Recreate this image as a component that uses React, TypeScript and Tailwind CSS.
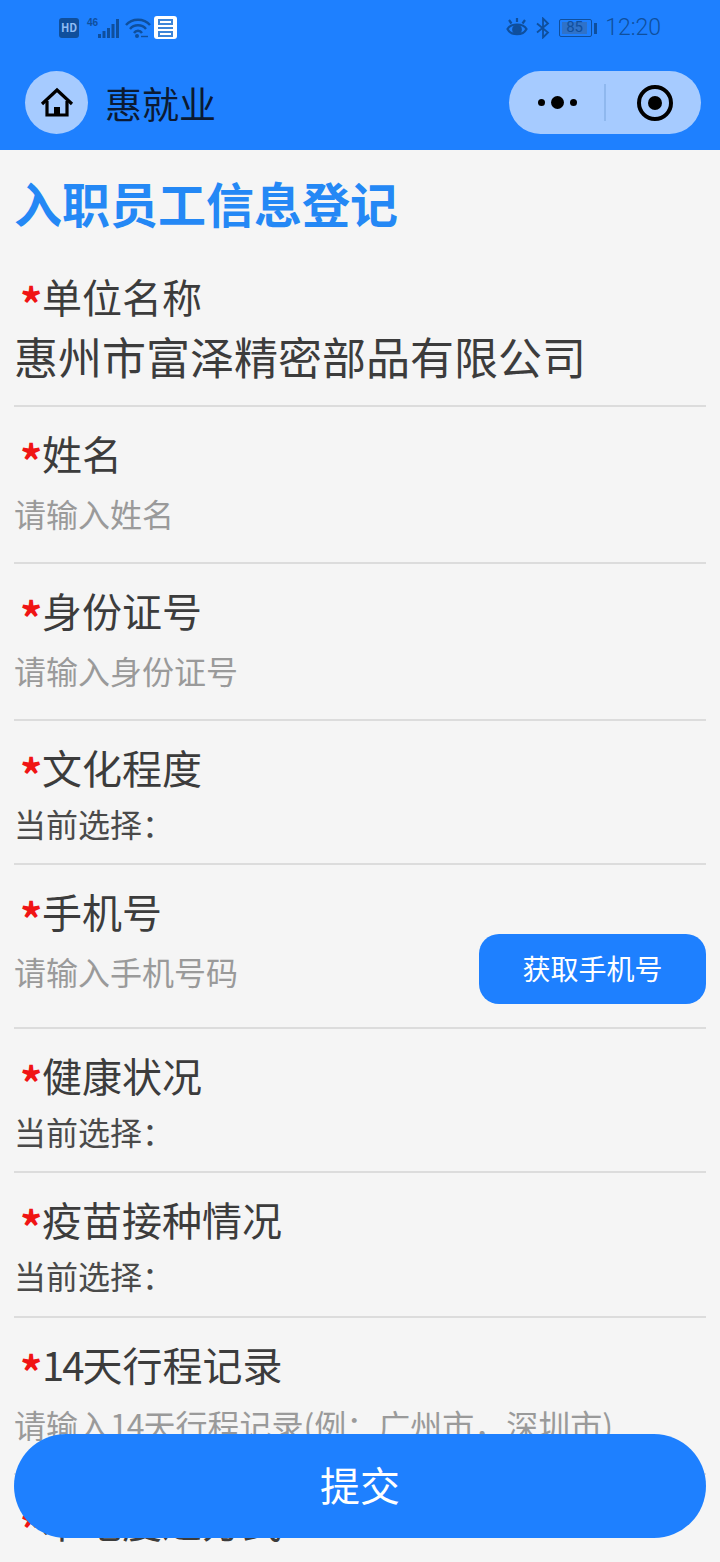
import type { ReactNode } from "react";

export default function App() { return <Page />; }

const font = "[font-family:'Noto_Sans_CJK_SC','Liberation_Sans',sans-serif]";

function Label({ text }: { text: ReactNode }) {
  return (
    <div className="flex h-10 items-center pl-[6px] text-[40px] leading-10 text-[#3c3c3c]">
      <span className="mt-[12px] h-5 w-[22px] text-[44px] leading-5 font-bold text-[#f01414]">*</span>
      <span>{text}</span>
    </div>
  );
}

function InputRow({ label, placeholder, h }: { label: ReactNode; placeholder: ReactNode; h: string }) {
  return (
    <section className={`${h} border-b-2 border-[#dcdcdc] pt-[26px]`}>
      <Label text={label} />
      <div className="mt-[20px] h-10 text-[32px] leading-10 text-[#9a9a9a]">{placeholder}</div>
    </section>
  );
}

function SelectRow({ label, h }: { label: ReactNode; h: string }) {
  return (
    <section className={`${h} border-b-2 border-[#dcdcdc] pt-[26px]`}>
      <Label text={label} />
      <div className="mt-4 h-10 text-[32px] leading-10 text-[#4a4a4a]">当前选择：</div>
    </section>
  );
}

function StatusBar() {
  return (
    <div className="flex h-[56px] items-start justify-between pl-[59px] pr-[59px] pt-[16px]">
      <div className="flex items-center">
        <div className="flex h-5 w-5 items-center justify-center rounded-[3px] bg-[#0f4f9d] text-[11px] leading-none font-bold text-[#8fbcf5]">HD</div>
        <svg width="36" height="22" viewBox="0 0 36 22" fill="#0f4f9d" className="ml-[7px]">
          <text x="1" y="9" fontSize="10" fontWeight="700" fontFamily="Liberation Sans">46</text>
          <rect x="12" y="17" width="3" height="4" /><rect x="16.5" y="14" width="3" height="7" /><rect x="21" y="11" width="3" height="10" /><rect x="25.5" y="7" width="3" height="14" /><rect x="30" y="2" width="3" height="19" />
        </svg>
        <svg width="26" height="22" viewBox="0 0 26 22" fill="none" stroke="#0f4f9d" strokeWidth="2.4" className="ml-[3px]">
          <path d="M1 8C7 1 19 1 25 8" /><path d="M5 12C9 7 17 7 21 12" /><path d="M9 16C11 13 15 13 17 16" /><circle cx="12" cy="19" r="2" fill="#0f4f9d" stroke="none" /><path d="M16 19.5H23" strokeWidth="1.4" />
        </svg>
        <div className="ml-[3px] flex h-[23px] w-[23px] flex-col justify-center gap-[2px] rounded-[3px] bg-white px-1">
          <div className="h-[6px] border-2 border-[#3d85d8]" />
          <div className="h-[2px] bg-[#3d85d8]" />
          <div className="h-[6px] border-2 border-[#3d85d8]" />
        </div>
      </div>
      <div className="flex items-center text-[#0f4f9d]">
        <svg width="22" height="22" viewBox="0 0 22 22" fill="none" stroke="#0f4f9d" strokeWidth="2.2">
          <path d="M1.5 12C5 6 17 6 20.5 12C17 19 5 19 1.5 12Z" /><circle cx="11" cy="12.5" r="3.8" fill="#0f4f9d" /><path d="M3 3L5.5 6.5M19 3L16.5 6.5M11 1V5" />
        </svg>
        <svg width="14" height="22" viewBox="0 0 14 22" fill="none" stroke="#0f4f9d" strokeWidth="1.8" className="ml-[8px]">
          <path d="M1 6.5L12 15.5L7 20.5V1.5L12 6.5L1 15.5" />
        </svg>
        <div className="relative ml-[9px] flex h-[18px] w-[33px] items-center rounded-[2px] border border-[#0f4f9d] p-[2px]">
          <div className="flex h-full w-[25px] items-center justify-center bg-[#2f72c9] pb-[1px] text-[15px] leading-none [font-family:'Roboto',sans-serif]">85</div>
        </div>
        <div className="ml-[2px] h-[11px] w-[3px] bg-[#0f4f9d]" />
        <span className="ml-[8px] text-[23px] leading-6 font-light [font-family:'Roboto',sans-serif]">12:20</span>
      </div>
    </div>
  );
}

function NavBar() {
  return (
    <div className="flex h-[94px] items-start justify-between pl-[25px] pr-[19px] pt-[15px]">
      <div className="flex items-center">
        <div className="flex h-[63px] w-[63px] items-center justify-center rounded-full bg-[#a6cbff]">
          <svg width="34" height="32" viewBox="0 0 34 32" fill="none" stroke="#000" strokeWidth="3.2" strokeLinejoin="miter">
            <path d="M2 17L17 3L32 17" /><path d="M7 14V28H27V14" /><path d="M14 28V20H20V28" fill="#000" stroke="none" />
          </svg>
        </div>
        <span className="ml-[17px] text-[37px] leading-10 text-[#0b1a33]">惠就业</span>
      </div>
      <div className="flex h-[63px] w-[192px] items-center rounded-full bg-[#a6cbff]">
        <div className="flex flex-1 items-center justify-center gap-[6px] pl-[1px]">
          <span className="h-[7px] w-[7px] rounded-full bg-black" />
          <span className="h-[13px] w-[13px] rounded-full bg-black" />
          <span className="h-[7px] w-[7px] rounded-full bg-black" />
        </div>
        <div className="h-[37px] w-[2px] bg-[#8fb8ee]" />
        <div className="flex w-[95px] items-center justify-center pl-[3px]">
          <div className="flex h-[36px] w-[36px] items-center justify-center rounded-full border-[4px] border-black">
            <span className="h-[14px] w-[14px] rounded-full bg-black" />
          </div>
        </div>
      </div>
    </div>
  );
}

function Page() {
  return (
    <div className={`${font} relative h-[1562px] w-[720px] overflow-hidden bg-[#f5f5f5]`}>
      <header className="h-[150px] bg-[#1e80ff]">
        <StatusBar />
        <NavBar />
      </header>
      <main className="px-[14px]">
        <h1 className="mt-[21px] h-[62px] text-[48px] leading-[62px] font-bold text-[#2488f5]">入职员工信息登记</h1>
        <section className="h-[174px] border-b-2 border-[#dcdcdc] pt-[43px]">
          <Label text="单位名称" />
          <div className="mt-[20px] h-10 text-[44px] leading-10 text-[#3c3c3c]">惠州市富泽精密部品有限公司</div>
        </section>
        <InputRow label="姓名" placeholder="请输入姓名" h="h-[157px]" />
        <InputRow label="身份证号" placeholder="请输入身份证号" h="h-[157px]" />
        <SelectRow label="文化程度" h="h-[144px]" />
        <section className="h-[164px] border-b-2 border-[#dcdcdc] pt-[26px]">
          <Label text="手机号" />
          <div className="flex items-start justify-between">
            <span className="mt-[20px] text-[32px] leading-10 text-[#9a9a9a]">请输入手机号码</span>
            <button className="mt-[3px] h-[70px] w-[227px] rounded-[20px] bg-[#1e80ff] pb-[3px] text-[28px] leading-none text-white">获取手机号</button>
          </div>
        </section>
        <SelectRow label="健康状况" h="h-[144px]" />
        <SelectRow label="疫苗接种情况" h="h-[145px]" />
        <InputRow
          label={<><span className="tracking-[-2px]">14</span>天行程记录</>}
          placeholder={<>请输入<span className="tracking-[-1px]">14</span>天行程记录(例：广州市，深圳市)</>}
          h="h-[157px]"
        />
        <SelectRow label="本地度过方式" h="h-[144px]" />
      </main>
      <button className="absolute left-[14px] top-[1434px] h-[104px] w-[692px] rounded-full bg-[#1e80ff] pb-1 text-[40px] text-white">提交</button>
    </div>
  );
}
